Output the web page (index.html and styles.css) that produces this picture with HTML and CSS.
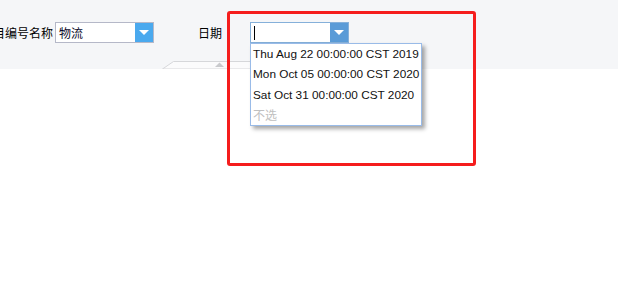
FILE: index.html
```html
<!DOCTYPE html>
<html lang="zh-CN">
<head>
  <meta charset="UTF-8">
  <meta name="viewport" content="width=device-width, initial-scale=1.0">
  <title>查询</title>
  <link rel="stylesheet" href="styles.css">
</head>
<body>
  <div class="query-bar">
    <div class="field">
      <label class="field-label first-label"><span>项目编号名称</span></label>
      <div class="combo">
        <div class="combo-input">物流</div>
        <div class="combo-btn"><span class="arrow"></span></div>
      </div>
    </div>
    <div class="field date-field">
      <label class="field-label">日期</label>
      <div class="combo combo-focus">
        <div class="combo-input"><span class="caret"></span></div>
        <div class="combo-btn"><span class="arrow"></span></div>
      </div>
    </div>
    <svg class="collapse-tab" width="116" height="8" viewBox="0 0 116 8">
      <polygon points="0.5,8 11.5,0.5 115.5,0.5 115.5,8" fill="#fbfbfc" stroke="#d6d7da" stroke-width="1"/>
      <polygon points="53,6 57.5,1.5 62,6" fill="#c9cacd"/>
    </svg>
  </div>
  <ul class="combo-list">
    <li>Thu Aug 22 00:00:00 CST 2019</li>
    <li>Mon Oct 05 00:00:00 CST 2020</li>
    <li>Sat Oct 31 00:00:00 CST 2020</li>
    <li class="empty">不选</li>
  </ul>
  <div class="highlight"></div>
</body>
</html>
```

FILE: styles.css
```css
body {
  margin: 0;
  padding: 0;
  background: #fff;
  font-family: "Liberation Sans", "Noto Sans CJK SC", sans-serif;
  font-size: 12px;
  color: #000;
}
.query-bar {
  position: relative;
  height: 69px;
  box-sizing: border-box;
  padding-top: 22px;
  background: #f5f6f8;
  display: flex;
  align-items: flex-start;
}
.field {
  display: flex;
  align-items: center;
}
.field-label {
  font-family: "Noto Sans CJK SC", sans-serif;
  font-size: 12px;
  line-height: 21px;
  white-space: nowrap;
}
.first-label {
  width: 53px;
  margin-right: 2px;
  overflow: hidden;
  display: flex;
  justify-content: flex-end;
}
.date-field {
  margin-left: 44px;
}
.date-field .field-label {
  width: 52px;
}
.combo {
  display: flex;
  width: 99px;
  height: 21px;
  box-sizing: border-box;
  border: 1px solid #b5b8c8;
  background: #fff;
}
.combo-input {
  flex: 1;
  padding-left: 3px;
  line-height: 19px;
  font-family: "Noto Sans CJK SC", sans-serif;
  color: #0a0a2a;
  display: flex;
  align-items: center;
}
.combo-btn {
  width: 18px;
  background: #4aa9ee;
  display: flex;
  align-items: center;
  justify-content: center;
}
.arrow {
  width: 0;
  height: 0;
  border-left: 5px solid transparent;
  border-right: 5px solid transparent;
  border-top: 5px solid #fff;
}
.combo-focus {
  border-color: #85b0da;
}
.combo-focus .combo-btn {
  background: #5a9bd7;
}
.caret {
  width: 1px;
  height: 14px;
  background: #000;
}
.combo-list {
  position: absolute;
  top: 43px;
  left: 250px;
  width: 172px;
  height: 83px;
  margin: 0;
  padding: 0;
  list-style: none;
  box-sizing: border-box;
  border: 1px solid #99bbe8;
  background: #fff;
  box-shadow: 3px 3px 4px rgba(0, 0, 0, 0.35);
}
.combo-list li {
  height: 20.3px;
  line-height: 20px;
  padding-left: 2px;
  font-size: 11.8px;
  white-space: nowrap;
  color: #111;
}
.combo-list li.empty {
  font-family: "Noto Sans CJK SC", sans-serif;
  font-size: 12px;
  color: #c0c0c0;
}
.collapse-tab {
  position: absolute;
  left: 162px;
  top: 61px;
}
.highlight {
  position: absolute;
  left: 227px;
  top: 11px;
  width: 249px;
  height: 155px;
  box-sizing: border-box;
  border: 3px solid #f51d1d;
  border-radius: 3px;
}
```
